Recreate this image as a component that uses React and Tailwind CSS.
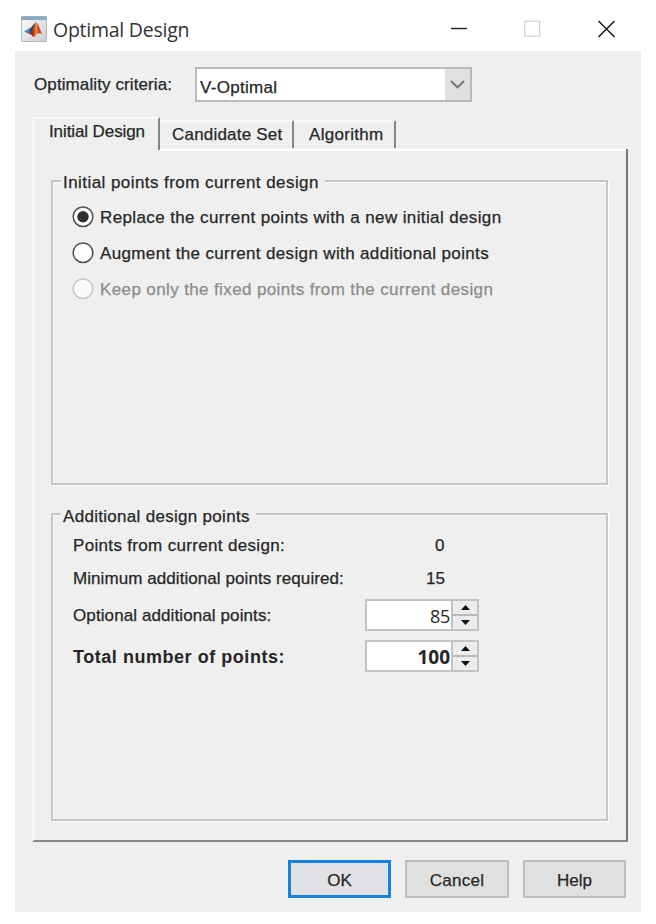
import React from "react";

function MatlabIcon() {
  return (
    <svg className="h-[26px] w-[26px] shrink-0" viewBox="0 0 26 26">
      <defs>
        <linearGradient id="frame" x1="0" y1="0" x2="1" y2="1">
          <stop offset="0" stopColor="#ffffff" />
          <stop offset="1" stopColor="#c8ccd2" />
        </linearGradient>
        <linearGradient id="membrane" x1="0" y1="0" x2="1" y2="0">
          <stop offset="0" stopColor="#7a1f16" />
          <stop offset="0.35" stopColor="#b5361c" />
          <stop offset="0.55" stopColor="#f4933a" />
          <stop offset="0.7" stopColor="#c8401c" />
          <stop offset="1" stopColor="#e8703a" />
        </linearGradient>
      </defs>
      <rect x="0.5" y="0.5" width="25" height="25" rx="0.5" fill="url(#frame)" stroke="#b4b8be" />
      <rect x="0.5" y="0.5" width="25" height="3.6" fill="#86a9c4" />
      <path d="M3 15.500L8.500 12.500L11 14.500L8 18Z" fill="#3f86bb" />
      <path d="M8.500 12.500C11 11.500 13 7 15 6.200L12 15L9 17.500Z" fill="#234f86" />
      <path d="M7.500 18C11 16.500 13 8 15.200 6.200C17.500 7 19 14.500 21.800 18.500C19.500 17 17.500 16.500 15.500 18.500C14.200 20 13.500 21 12 21C11.500 19 9.500 17.500 7.500 18Z" fill="url(#membrane)" />
    </svg>
  );
}

function Radio({ label, checked, disabled, textClass }) {
  return (
    <label className="flex h-9 items-center">
      <svg className="mr-[6px] h-[22px] w-[22px] shrink-0" viewBox="0 0 22 22">
        <circle cx="11" cy="10.7" r="9.8" fill={disabled ? "#fafafa" : "#fff"} stroke={disabled ? "#c6c6c6" : "#505050"} strokeWidth="1.500" />
        {checked && <circle cx="11" cy="10.7" r="5.700" fill="#303030" />}
      </svg>
      <span className={"pt-[2px] " + textClass}>{label}</span>
    </label>
  );
}

function Group({ title, titleClass, className, children }) {
  return (
    <section className={"flex w-[557px] flex-col " + className}>
      <div className="flex h-[18px] items-center">
        <div className="h-[11px] w-[10px] shrink-0 self-end border-t-2 border-l-2 border-[#c6c6c6] shadow-[inset_1px_1px_0_#fafafa]" />
        <h2 className={"shrink-0 pr-[6px] pl-[2px] " + titleClass}>{title}</h2>
        <div className="h-[11px] flex-1 self-end border-t-2 border-r-2 border-[#c6c6c6] shadow-[inset_0_1px_0_#fafafa,1px_0_0_#fff]" />
      </div>
      <div className="flex-1 border-r-2 border-b-2 border-l-2 border-[#c6c6c6] shadow-[1px_1px_0_#fff,inset_1px_0_0_#fafafa]">
        {children}
      </div>
    </section>
  );
}

function Spinner({ value, valueClass }) {
  return (
    <div className="flex h-[32px] w-[114px] border-2 border-[#c2c2c8] bg-white">
      <div className={"flex flex-1 items-center justify-end pt-[2px] pr-[1px] font-['Open_Sans','Noto_Sans',sans-serif] " + valueClass}>{value}</div>
      <div className="flex w-[26px] flex-col border-l-2 border-[#c2c2c8] bg-[#ececec]">
        <div className="flex flex-1 items-center justify-center">
          <svg className="h-[5px] w-[9px]" viewBox="0 0 9 5"><path d="M0 5L4.500 0L9 5Z" fill="#111" /></svg>
        </div>
        <div className="h-[2px] bg-[#b8b8b8]" />
        <div className="flex flex-1 items-center justify-center">
          <svg className="h-[5px] w-[9px]" viewBox="0 0 9 5"><path d="M0 0L9 0L4.500 5Z" fill="#111" /></svg>
        </div>
      </div>
    </div>
  );
}

export default function App() {
  return (
    <div className="flex h-[924px] w-[656px] flex-col bg-white pl-[15px] font-['Liberation_Sans',Arial,sans-serif] text-[17px] leading-[18px] whitespace-nowrap text-[#262626]">
      <header className="flex h-[51px] shrink-0 items-center pt-[7px] pl-[6px]">
        <MatlabIcon />
        <h1 className="ml-[6px] w-[398px] pt-px font-['Open_Sans','Noto_Sans',sans-serif] text-[19.500px] leading-6 tracking-[-0.25px] text-[#333]">Optimal Design</h1>
        <svg className="h-[18px] w-[166px]" viewBox="0 0 166 18" fill="none">
          <path d="M0 8.500H16" stroke="#222" strokeWidth="1.400" />
          <rect x="73.700" y="1.200" width="15" height="15" stroke="#cfcfcf" strokeWidth="1.200" />
          <path d="M147.500 1L163.500 17M163.500 1L147.500 17" stroke="#111" strokeWidth="1.400" />
        </svg>
      </header>

      <main className="flex h-[861px] w-[626px] shrink-0 flex-col bg-[#efefef] [-webkit-text-stroke:0.25px]">
        <div className="flex h-[66px] pt-[16px] pl-[19px]">
          <span className="w-[161px] pt-[9px] tracking-[0.1px]">Optimality criteria:</span>
          <div className="flex h-[35px] w-[277px] border-2 border-[#b9b9bf] bg-white">
            <span className="flex-1 pt-[10px] pl-[3px] tracking-[0.3px]">V-Optimal</span>
            <div className="flex w-[25px] items-center justify-center bg-[#e0e0e0]">
              <svg className="h-[9px] w-[15px]" viewBox="0 0 15 9" fill="none"><path d="M1 1L7.500 7.500L14 1" stroke="#707070" strokeWidth="1.800" /></svg>
            </div>
          </div>
        </div>

        <nav className="flex h-[32px] pl-[17px]">
          <div className="h-[33px] w-[128px] border-t-2 border-r-2 border-l-2 border-t-[#f8f8f8] border-r-[#858585] border-l-[#f8f8f8] pt-[4px] pl-[15px] tracking-[-0.1px]">Initial Design</div>
          <div className="mt-[3px] h-[28px] w-[134px] border-t-2 border-r-2 border-t-[#f8f8f8] border-r-[#858585] pt-[4px] pl-[12px] tracking-[0.2px]">Candidate Set</div>
          <div className="mt-[3px] h-[28px] w-[102px] border-t-2 border-r-2 border-t-[#f8f8f8] border-r-[#858585] pt-[4px] pl-[15px] tracking-[0.3px]">Algorithm</div>
        </nav>

        <div className="ml-[17px] flex h-[693px] w-[596px] flex-col border-r-2 border-b-2 border-l-2 border-r-[#777] border-b-[#888] border-l-[#f8f8f8]">
          <div className="ml-[126px] h-[2px] shrink-0 bg-white" />
          <div className="pt-[22px] pl-[17px]">
            <Group title="Initial points from current design" titleClass="pt-[2px] tracking-[0.44px]" className="h-[312px]">
              <div className="pt-[8px] pl-[19px]">
                <Radio checked label="Replace the current points with a new initial design" textClass="tracking-[0.38px]" />
                <Radio label="Augment the current design with additional points" textClass="tracking-[0.36px]" />
                <Radio disabled label="Keep only the fixed points from the current design" textClass="tracking-[0.38px] text-[#8b8b8b]" />
              </div>
            </Group>
            <Group title="Additional design points" titleClass="pt-[4px] tracking-[0.3px]" className="mt-[21px] h-[315px]">
              <div className="pl-[20px]">
                <div className="flex h-[42px] items-center pt-[2px]">
                  <span className="w-[362px] tracking-[0.33px]">Points from current design:</span><span>0</span>
                </div>
                <div className="flex h-[24px] items-center pt-[2px]">
                  <span className="w-[353px] tracking-[0.07px]">Minimum additional points required:</span><span>15</span>
                </div>
                <div className="mt-[9px] flex h-[32px] items-center">
                  <span className="w-[292px] pt-[2px] tracking-[0.1px]">Optional additional points:</span><Spinner value="85" valueClass="text-[18px] tracking-[-0.3px] [-webkit-text-stroke:0px]" />
                </div>
                <div className="mt-[9px] flex h-[32px] items-center">
                  <span className="w-[292px] pt-[2px] text-[18px] font-bold tracking-[0.54px] [-webkit-text-stroke:0px]">Total number of points:</span><Spinner value="100" valueClass="text-[19px] font-bold [-webkit-text-stroke:0px]" />
                </div>
              </div>
            </Group>
          </div>
        </div>

        <footer className="mt-[18px] flex gap-[14px] pl-[273px]">
          <button className="h-[38px] w-[103px] border-[3px] border-[#1583dc] bg-[#e0e2e5] pt-[3px]">OK</button>
          <button className="h-[38px] w-[104px] border-2 border-[#bdbdbd] bg-[#e0e0e0] pt-[3px] tracking-[0.3px]">Cancel</button>
          <button className="h-[38px] w-[103px] border-2 border-[#bdbdbd] bg-[#e0e0e0] pt-[3px]">Help</button>
        </footer>
      </main>
    </div>
  );
}
